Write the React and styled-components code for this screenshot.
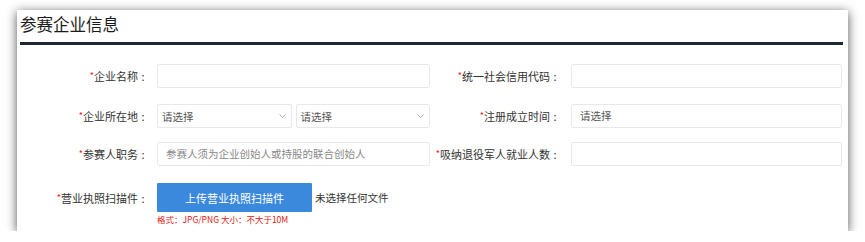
import React from "react";
import styled, { createGlobalStyle } from "styled-components";

const Global = createGlobalStyle`
  html, body { margin: 0; padding: 0; background: #fff; }
  body { font-family: "Noto Sans CJK SC", "Liberation Sans", sans-serif; }
`;

const Card = styled.div`
  margin: 10px 0 0 17px;
  width: 831px;
  height: 221px;
  background: #fff;
  box-shadow: 0 2px 10px rgba(0, 0, 0, 0.68);
  box-sizing: border-box;
  padding: 0 5px 0 3px;
`;

const Title = styled.h2`
  margin: 0;
  box-sizing: border-box;
  padding-top: 2px;
  font-size: 16.5px;
  line-height: 24px;
  font-weight: 400;
  color: #1a1a1a;
  border-bottom: 3px solid #1d2733;
  height: 35px;
`;

const Form = styled.div`
  display: flex;
  flex-direction: column;
  padding-top: 19px;
`;

const Row = styled.div`
  display: flex;
  align-items: flex-start;
  height: ${(p) => p.$h}px;
`;

const Field = styled.div`
  display: flex;
  align-items: flex-start;
`;

const Label = styled.label`
  width: ${(p) => p.$w}px;
  margin-right: ${(p) => p.$gap}px;
  text-align: right;
  font-size: 11px;
  height: ${(p) => p.$lh || 24}px;
  line-height: ${(p) => p.$lh || 24}px;
  color: #333;
  white-space: nowrap;
`;

const Star = styled.span`
  color: #e02020;
  font-size: 9px;
  vertical-align: 2px;
`;

const Colon = styled.span`
  display: inline-block;
  width: 10px;
  text-align: center;
`;

const Input = styled.div`
  width: ${(p) => p.$w}px;
  height: 24px;
  box-sizing: border-box;
  border: 1px solid #e8e8e8;
  border-radius: 2px;
  padding-left: 8px;
  font-size: 10.5px;
  line-height: 22px;
  color: ${(p) => (p.$dark ? "#555" : "#888")};
  background: #fff;
`;

const Selects = styled.div`
  display: flex;
  gap: 4px;
  width: 273px;
`;

const Select = styled.div`
  flex: 1;
  height: 24px;
  box-sizing: border-box;
  border: 1px solid #e8e8e8;
  border-radius: 2px;
  padding: 0 5px 0 4px;
  display: flex;
  align-items: center;
  justify-content: space-between;
  font-size: 10.5px;
  color: #555;
`;

const Upload = styled.div`
  display: flex;
  flex-direction: column;
`;

const UploadLine = styled.div`
  display: flex;
  align-items: center;
`;

const UploadBtn = styled.button`
  width: 155px;
  height: 29px;
  border: none;
  border-radius: 1px;
  background: #3b89dd;
  color: #fff;
  font-family: inherit;
  font-size: 11px;
  padding: 0;
  margin-right: 3px;
`;

const NoFile = styled.span`
  font-size: 10.5px;
  color: #333;
`;

const Hint = styled.div`
  font-size: 8.5px;
  line-height: 10px;
  margin-top: 2px;
  color: #e01818;
`;

const Chevron = () => (
  <svg width="7" height="4" viewBox="0 0 7 4">
    <path d="M0.5 0.5 L3.5 3.5 L6.5 0.5" fill="none" stroke="#999" strokeWidth="0.8" />
  </svg>
);

const L = ({ children, w, gap, lh }) => (
  <Label $w={w} $gap={gap} $lh={lh}>
    <Star>*</Star>
    {children}
    <Colon>:</Colon>
  </Label>
);

export default function App() {
  return (
    <>
      <Global />
      <Card>
        <Title>参赛企业信息</Title>
        <Form>
          <Row $h={40}>
            <Field>
              <L w={128} gap={9}>企业名称</L>
              <Input $w={273} />
            </Field>
            <Field>
              <L w={130} gap={11}>统一社会信用代码</L>
              <Input $w={271} />
            </Field>
          </Row>
          <Row $h={38}>
            <Field>
              <L w={128} gap={9}>企业所在地</L>
              <Selects>
                <Select>
                  请选择
                  <Chevron />
                </Select>
                <Select>
                  请选择
                  <Chevron />
                </Select>
              </Selects>
            </Field>
            <Field>
              <L w={130} gap={11}>注册成立时间</L>
              <Input $w={271} $dark>请选择</Input>
            </Field>
          </Row>
          <Row $h={41}>
            <Field>
              <L w={128} gap={9}>参赛人职务</L>
              <Input $w={273}>参赛人须为企业创始人或持股的联合创始人</Input>
            </Field>
            <Field>
              <L w={130} gap={11}>吸纳退役军人就业人数</L>
              <Input $w={271} />
            </Field>
          </Row>
          <Row $h={40}>
            <Field>
              <L w={128} gap={9} lh={29}>营业执照扫描件</L>
              <Upload>
                <UploadLine>
                  <UploadBtn>上传营业执照扫描件</UploadBtn>
                  <NoFile>未选择任何文件</NoFile>
                </UploadLine>
                <Hint>格式：JPG/PNG 大小：不大于10M</Hint>
              </Upload>
            </Field>
          </Row>
        </Form>
      </Card>
    </>
  );
}
